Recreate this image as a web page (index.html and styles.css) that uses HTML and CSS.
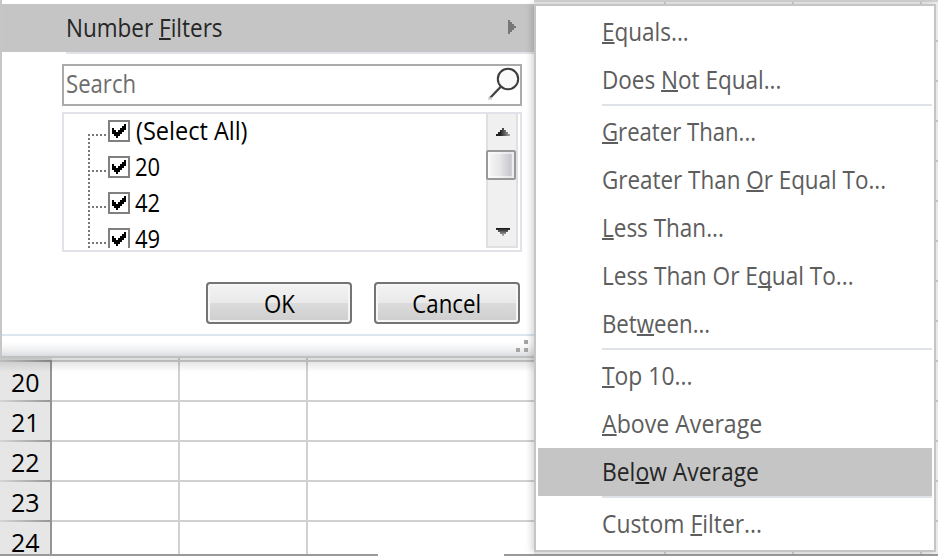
FILE: index.html
```html
<!DOCTYPE html>
<html lang="en">
<head>
<meta charset="utf-8">
<title>Number Filters</title>
<link rel="stylesheet" href="styles.css">
</head>
<body>
<div class="window">
  <main class="column-side">
    <section class="filter-menu">
      <div class="menu-row"><span class="txt s900">Number <u>F</u>ilters</span><svg class="caret" width="8" height="14" viewBox="0 0 8 14"><path d="M0 0h2v2h2v2h2v2h2v2H6v2H4v2H2v2H0z" fill="#777"/></svg></div>
      <div class="divider"></div>
      <div class="search"><span class="txt s885">Search</span><svg class="lens" width="34" height="36" viewBox="0 0 34 36"><circle cx="21" cy="13" r="10.2" fill="#fafafa" stroke="#3c3c3c" stroke-width="2"/><path d="M14 20.5L3 32" stroke="#444" stroke-width="2.4" fill="none"/><path d="M1 31h4v3H1z" fill="#ccc" opacity=".7"/></svg></div>
      <div class="list">
        <div class="values">
          <div class="value"><i class="branch"></i><span class="check"><svg width="18" height="18" viewBox="0 0 18 18"><path d="M2 6h2v2h2v2h2V8h2V6h2V4h2V2h2v6h-2v2h-2v2h-2v2H8v2H6v-2H4v-2H2z"/></svg></span><span class="txt s940 all">(Select All)</span></div>
          <div class="value"><i class="branch"></i><span class="check"><svg width="18" height="18" viewBox="0 0 18 18"><path d="M2 6h2v2h2v2h2V8h2V6h2V4h2V2h2v6h-2v2h-2v2h-2v2H8v2H6v-2H4v-2H2z"/></svg></span><span class="txt s880">20</span></div>
          <div class="value"><i class="branch"></i><span class="check"><svg width="18" height="18" viewBox="0 0 18 18"><path d="M2 6h2v2h2v2h2V8h2V6h2V4h2V2h2v6h-2v2h-2v2h-2v2H8v2H6v-2H4v-2H2z"/></svg></span><span class="txt s880">42</span></div>
          <div class="value"><i class="branch"></i><span class="check"><svg width="18" height="18" viewBox="0 0 18 18"><path d="M2 6h2v2h2v2h2V8h2V6h2V4h2V2h2v6h-2v2h-2v2h-2v2H8v2H6v-2H4v-2H2z"/></svg></span><span class="txt s880">49</span></div>
        </div>
        <div class="scrollbar">
          <svg width="14" height="8" viewBox="0 0 14 8"><defs><linearGradient id="a"><stop offset=".3" stop-color="#222"/><stop offset="1" stop-color="#aaa"/></linearGradient></defs><path d="M6 0h2v2h2v2h2v2h2v2H0V6h2V4h2V2h2z" fill="url(#a)"/></svg>
          <div class="thumb"></div>
          <svg class="down" width="14" height="8" viewBox="0 0 14 8"><defs><linearGradient id="b" x2="0" y2="1"><stop stop-color="#111"/><stop offset="1" stop-color="#bbb"/></linearGradient></defs><path d="M0 0h14v2h-2v2h-2v2H8v2H6V6H4V4H2V2H0z" fill="url(#b)"/></svg>
        </div>
      </div>
      <div class="actions"><div class="button"><span class="txt s890">OK</span></div><div class="button"><span class="txt s890">Cancel</span></div></div>
      <footer class="footer"><svg width="12" height="12" viewBox="0 0 12 12" fill="#a6a6a6"><path d="M8 0h4v4H8zM0 8h4v4H0zM8 8h4v4H8z"/></svg></footer>
    </section>
    <section class="sheet">
      <div class="row stub"><span></span><i></i><i></i><i></i></div>
      <div class="row"><span>20</span><i></i><i></i><i></i></div>
      <div class="row"><span>21</span><i></i><i></i><i></i></div>
      <div class="row"><span>22</span><i></i><i></i><i></i></div>
      <div class="row"><span>23</span><i></i><i></i><i></i></div>
      <div class="row last"><span>24</span><i></i><i></i><i></i></div>
    </section>
  </main>
  <div class="right-sheet"></div>
  <div class="bottom-edge"></div>
  <nav class="submenu">
    <div class="item"><span class="txt s900"><u>E</u>quals...</span></div>
    <div class="item"><span class="txt s900">Does <u>N</u>ot Equal...</span></div>
    <div class="sep"></div>
    <div class="item"><span class="txt s885"><u>G</u>reater Than...</span></div>
    <div class="item"><span class="txt s897">Greater Than <u>O</u>r Equal To...</span></div>
    <div class="item"><span class="txt s900"><u>L</u>ess Than...</span></div>
    <div class="item"><span class="txt s905">Less Than Or E<u>q</u>ual To...</span></div>
    <div class="item"><span class="txt s890">Bet<u>w</u>een...</span></div>
    <div class="sep"></div>
    <div class="item"><span class="txt s915"><u>T</u>op 10...</span></div>
    <div class="item"><span class="txt s925"><u>A</u>bove Average</span></div>
    <div class="item active"><span class="txt s915">Bel<u>o</u>w Average</span></div>
    <div class="sep"></div>
    <div class="item"><span class="txt s915">Custom <u>F</u>ilter...</span></div>
  </nav>
</div>
</body>
</html>
```
FILE: styles.css
```css
* { box-sizing: border-box; }
body { margin: 0; font: 25px/34px "Open Sans", "Noto Sans", sans-serif; color: #000; background: #fff; }
.window { position: relative; display: flex; width: 938px; height: 556px; overflow: hidden; background: #fff; }
.txt { display: inline-block; white-space: pre; transform-origin: 0 50%; }
.s880 { transform: scaleX(.88); }
.s885 { transform: scaleX(.885); }
.s890 { transform: scaleX(.89); }
.s897 { transform: scaleX(.897); }
.s900 { transform: scaleX(.9); }
.s905 { transform: scaleX(.905); }
.s915 { transform: scaleX(.915); }
.s925 { transform: scaleX(.925); }
.s940 { transform: scaleX(.94); }
u { text-decoration: underline; text-decoration-thickness: 2px; text-underline-offset: 1px; text-decoration-skip-ink: none; }

.column-side { width: 534px; }
.filter-menu { height: 358px; padding-top: 4px; border-left: 2px solid #c6c6c6; border-bottom: 2px solid #c0c0c0; }
.menu-row { display: flex; align-items: center; justify-content: space-between; height: 48px; padding: 0 18px 2px 64px; background: #c5c5c5; color: #262626; }
.divider { height: 2px; margin-left: 64px; background: #e2e3e8; }
.search { display: flex; justify-content: space-between; width: 460px; height: 42px; margin: 10px 0 6px 60px; padding-left: 2px; border: 2px solid #ababab; color: #6d6d6d; }
.search .txt { line-height: 35px; }
.search .lens { margin-right: -1px; flex: none; }
.list { display: flex; justify-content: space-between; width: 460px; height: 140px; margin-left: 60px; border: 2px solid #e2e3ea; padding: 0 2px 2px 0; }
.values { position: relative; width: 390px; height: 134px; padding-left: 24px; overflow: hidden; }
.values::before { content: ""; position: absolute; left: 24px; top: 20px; bottom: 0; width: 2px; background: repeating-linear-gradient(#777 0 2px, transparent 2px 4px); }
.value { display: flex; align-items: flex-start; height: 36px; line-height: 32px; }
.branch { width: 18px; height: 2px; margin: 20px 2px 0 0; background: repeating-linear-gradient(90deg, #777 0 2px, transparent 2px 4px); }
.check { width: 22px; height: 22px; margin: 6px 5px 0 0; border: 2px solid #808080; background: #fff; }
.check svg { display: block; }
.value .txt { margin-top: 0; }
.value .all { margin-left: 1px; }
.scrollbar { display: flex; flex-direction: column; align-items: center; width: 32px; height: 134px; padding-top: 14px; border: 2px solid #e0e0e0; border-top: 0; background: #f0f0f0; }
.scrollbar svg { flex: none; margin-left: 2px; }
.thumb { flex: none; width: 30px; height: 30px; margin: 14px 0 48px -2px; border: 2px solid #999; border-radius: 2px; background: linear-gradient(90deg, #f7f7f7, #e7e7e9 45%, #c8c8cf 85%, #dcdce0); box-shadow: inset 0 0 0 2px rgba(255,255,255,.55); }
.actions { display: flex; gap: 22px; margin: 30px 0 10px 204px; }
.button { display: flex; justify-content: center; width: 146px; height: 42px; border: 2px solid #747474; border-radius: 4px; box-shadow: inset 0 0 0 2px #f6f6f6; background: linear-gradient(#f3f3f3 0, #e9e9e9 49%, #dbdbdb 50%, #cecece 100%); line-height: 38px; }
.button .txt { transform-origin: 50% 50%; }
.footer { display: flex; justify-content: flex-end; height: 22px; padding: 4px 6px 0; border-top: 2px solid #dce6ef; background: linear-gradient(#fff 30%, #f6f6f7 55%, #e6e7ea 85%, #dadbde); }

.sheet { position: relative; height: 198px; }
.sheet::before { content: ""; position: absolute; left: 0; right: 0; top: 0; height: 14px; background: linear-gradient(rgba(0,0,0,.14), transparent); }
.row { display: grid; grid-template-columns: 52px 128px 128px 1fr; height: 40px; }
.row span { padding: 0 0 0 11px; border-right: 2px solid #969696; border-bottom: 2px solid; border-image: linear-gradient(90deg, #d8d8d8, #939393) 2; border-top: 0; border-left: 0; background: #e6e6e6; line-height: 40px; height: 40px; }
.row i { border-right: 2px solid #d1d1d1; border-bottom: 2px solid #d1d1d1; }
.row i:last-child { border-right: 0; }
.row.stub { height: 4px; }
.row.stub span { height: 4px; line-height: 0; }
.row.last { height: 34px; overflow: hidden; }
.right-sheet { width: 404px; height: 556px; border-top: 2px solid #d0d0d0; background: repeating-linear-gradient(90deg, transparent 0 130px, #c8c8c8 130px 132px, transparent 132px 258px, #c8c8c8 258px 260px, transparent 260px 386px, #c8c8c8 386px 388px, transparent 388px 404px), repeating-linear-gradient(#ededed 0 38px, #c8c8c8 38px 40px); }
.bottom-edge { position: absolute; left: 0; right: 0; bottom: 0; height: 2px; background: linear-gradient(90deg, #999 0 378px, #fff 378px 504px, #999 504px); }
.submenu { position: absolute; left: 534px; top: 4px; width: 402px; height: 548px; padding: 2px; border: 2px solid #c5c5c5; background: #fff; color: #5d5d5d; box-shadow: -3px 0 6px rgba(0,0,0,.15); }
.item { height: 48px; padding: 6px 0 0 64px; }
.item.active { background: #c5c5c5; color: #262626; }
.sep { height: 4px; margin-left: 64px; border-top: 2px solid #dfe3e8; }
```
